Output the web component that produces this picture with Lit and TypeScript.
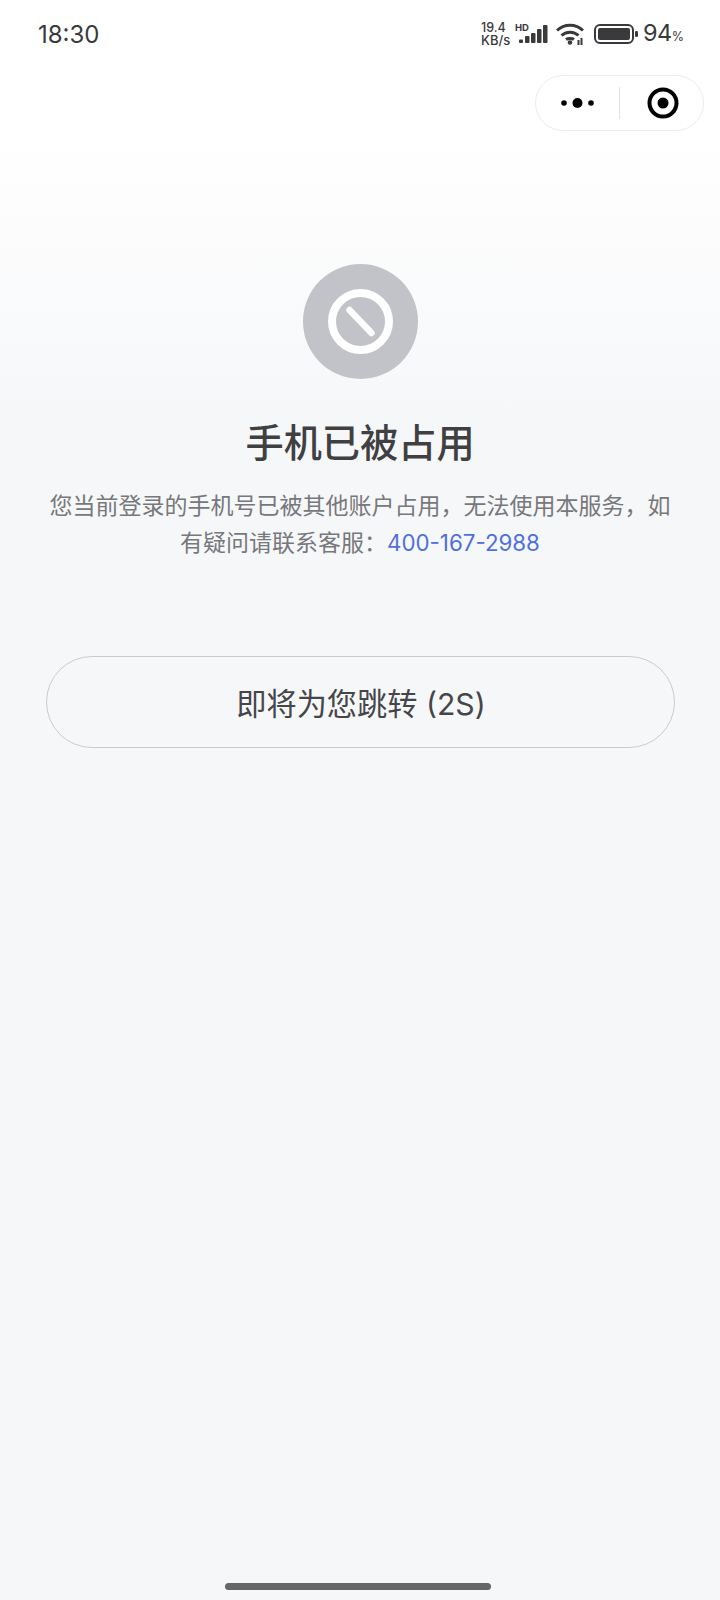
import { LitElement, html, css } from "lit";
import { customElement } from "lit/decorators.js";

const SANS = css`Inter, "Noto Sans CJK SC", sans-serif`;

@customElement("app-root")
export class AppRoot extends LitElement {
  static styles = css`
    :host {
      display: block;
      width: 720px;
      height: 1600px;
      font-family: ${SANS};
      background: linear-gradient(180deg, #ffffff 0, #ffffff 130px, #f6f7f9 420px);
    }
    .page {
      height: 1600px;
      box-sizing: border-box;
      display: flex;
      flex-direction: column;
      align-items: center;
    }
    .status {
      align-self: stretch;
      height: 68px;
      box-sizing: border-box;
      padding: 0 38px;
      display: flex;
      align-items: center;
      justify-content: space-between;
      color: #3a3a3c;
    }
    .time {
      font-size: 24px;
    }
    .right {
      display: flex;
      align-items: center;
    }
    .speed {
      display: flex;
      flex-direction: column;
      align-items: flex-start;
      font-size: 12.5px;
      line-height: 12.5px;
      font-weight: 500;
      width: 34px;
    }
    .speed .unit {
      font-size: 13px;
    }
    .sig,
    .wifi,
    .batt {
      display: block;
    }
    .wifi {
      margin-left: 8px;
    }
    .batt {
      margin-left: 10px;
    }
    .pct {
      width: 39px;
      margin-left: 5px;
      padding-top: 2px;
      font-size: 23.5px;
      line-height: 30px;
      letter-spacing: -0.5px;
      white-space: nowrap;
    }
    .pct small {
      font-size: 12.5px;
    }
    .caprow {
      align-self: stretch;
      display: flex;
      justify-content: flex-end;
      padding: 7px 16px 0 0;
    }
    .capsule {
      width: 169px;
      height: 56px;
      box-sizing: border-box;
      border: 1px solid #ececec;
      border-radius: 28px;
      display: flex;
      align-items: center;
      background: rgba(255, 255, 255, 0.6);
    }
    .capsule .l {
      width: 83px;
      display: flex;
      justify-content: center;
    }
    .capsule .div {
      width: 1px;
      height: 32px;
      background: #e2e2e2;
    }
    .capsule .r {
      flex: 1;
      padding-left: 2px;
      display: flex;
      justify-content: center;
    }
    .icon {
      display: block;
      margin: 133px 0 0 1px;
    }
    h1 {
      margin: 35px 0 0;
      font-size: 38.2px;
      line-height: 56px;
      font-weight: 500;
      color: #404042;
    }
    .desc {
      margin: 17px 0 0;
      width: 630px;
      text-align: center;
      font-size: 23px;
      line-height: 36.6px;
      color: #77787c;
    }
    .desc .line {
      display: block;
      white-space: nowrap;
    }
    .desc .phone {
      color: #4f6fe0;
      font-size: 22.3px;
    }
    .btn {
      margin-top: 95px;
      width: 629px;
      height: 92px;
      box-sizing: border-box;
      border: 1.5px solid #cacbcf;
      border-radius: 46px;
      display: flex;
      align-items: center;
      justify-content: center;
      padding-left: 2px;
      font-size: 30.2px;
      color: #46464a;
    }
    .spacer {
      flex: 1;
    }
    .home {
      width: 266px;
      height: 7px;
      border-radius: 4px;
      background: #666666;
      margin: 0 4px 10px 0;
    }
  `;

  render() {
    return html`
      <div class="page">
        <div class="status">
          <span class="time">18:30</span>
          <div class="right">
            <div class="speed"><span>19.4</span><span class="unit">KB/s</span></div>
            <svg class="sig" width="33" height="22" viewBox="0 0 33 22" fill="#3a3a3c">
              <text x="0" y="7.500" font-size="9.500" font-weight="700" font-family="Inter, sans-serif">HD</text>
              <rect x="4" y="16.500" width="4" height="3.500" rx="1"/>
              <rect x="10" y="13" width="4.500" height="7" rx="1"/>
              <rect x="16" y="10" width="4.500" height="10" rx="1"/>
              <rect x="22" y="6" width="4.500" height="14" rx="1"/>
              <rect x="28" y="2" width="4.500" height="18" rx="1"/>
            </svg>
            <svg class="wifi" width="28" height="22" viewBox="0 0 28 22" fill="none" stroke="#3a3a3c" stroke-width="3">
              <path d="M1 7.500C8 .5 20 .5 27 7.500"/>
              <path d="M5.500 12.500c4.500-4.500 12.500-4.500 17 0"/>
              <path d="M10 16.500c2-1.500 6-1.500 8 0"/>
              <circle cx="14" cy="19.500" r="2.300" fill="#3a3a3c" stroke="none"/>
              <rect x="21.500" y="17" width="2" height="5" fill="#3a3a3c" stroke="none"/>
              <rect x="24.500" y="15" width="2" height="7" fill="#3a3a3c" stroke="none"/>
            </svg>
            <svg class="batt" width="44" height="20" viewBox="0 0 44 20">
              <rect x="1" y="1" width="38" height="18" rx="5" fill="none" stroke="#3a3a3c" stroke-width="2"/>
              <rect x="4" y="4" width="32" height="12" rx="2" fill="#3a3a3c"/>
              <rect x="41" y="7" width="3" height="6" rx="1.200" fill="#3a3a3c"/>
            </svg>
            <span class="pct">94<small>%</small></span>
          </div>
        </div>
        <div class="caprow">
          <div class="capsule">
            <div class="l">
              <svg width="34" height="12" viewBox="0 0 34 12" fill="#000">
                <circle cx="3" cy="6" r="2.800"/><circle cx="16.500" cy="6" r="5"/><circle cx="30" cy="6" r="2.800"/>
              </svg>
            </div>
            <div class="div"></div>
            <div class="r">
              <svg width="32" height="32" viewBox="0 0 32 32">
                <circle cx="16" cy="16" r="13.500" fill="none" stroke="#000" stroke-width="4"/>
                <circle cx="16" cy="16" r="5.500" fill="#000"/>
              </svg>
            </div>
          </div>
        </div>
        <svg class="icon" width="116" height="116" viewBox="0 0 116 116">
          <circle cx="57.500" cy="57.500" r="57.500" fill="#c2c3c9"/>
          <circle cx="57.500" cy="57.500" r="28.500" fill="none" stroke="#fff" stroke-width="8"/>
          <line x1="46.500" y1="46" x2="68.500" y2="69" stroke="#fff" stroke-width="6.500" stroke-linecap="round"/>
        </svg>
        <h1>手机已被占用</h1>
        <p class="desc">
          <span class="line">您当前登录的手机号已被其他账户占用，无法使用本服务，如</span>
          <span class="line">有疑问请联系客服：<span class="phone">400-167-2988</span></span>
        </p>
        <div class="btn">即将为您跳转 (2S)</div>
        <div class="spacer"></div>
        <div class="home"></div>
      </div>
    `;
  }
}
